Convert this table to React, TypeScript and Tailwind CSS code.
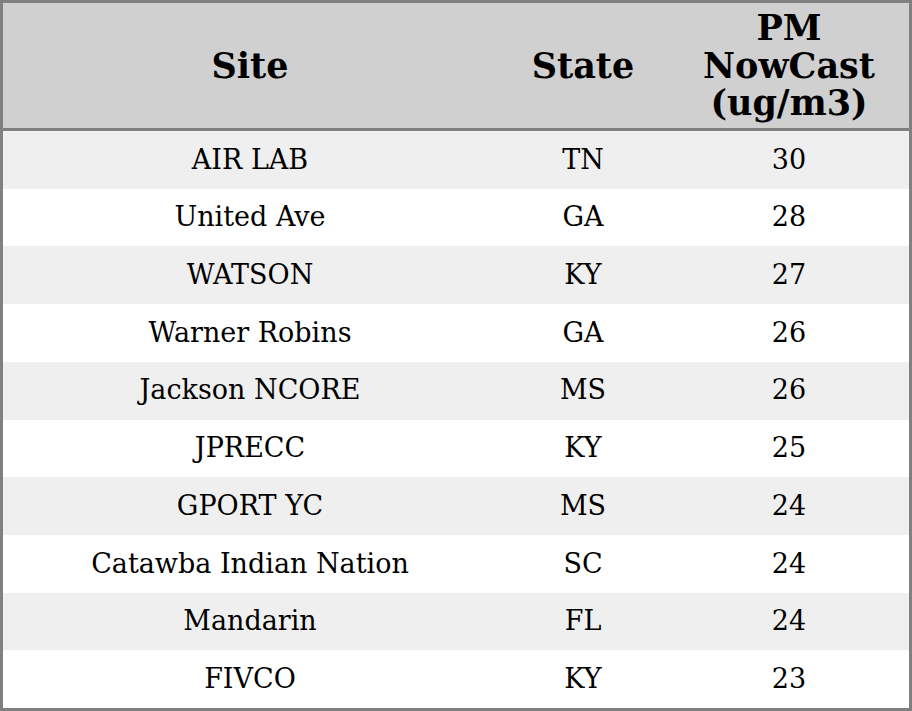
const rows = [
  { site: "AIR LAB", state: "TN", pm: 30 },
  { site: "United Ave", state: "GA", pm: 28 },
  { site: "WATSON", state: "KY", pm: 27 },
  { site: "Warner Robins", state: "GA", pm: 26 },
  { site: "Jackson NCORE", state: "MS", pm: 26 },
  { site: "JPRECC", state: "KY", pm: 25 },
  { site: "GPORT YC", state: "MS", pm: 24 },
  { site: "Catawba Indian Nation", state: "SC", pm: 24 },
  { site: "Mandarin", state: "FL", pm: 24 },
  { site: "FIVCO", state: "KY", pm: 23 },
];

const App = () => {
  return (
    <div
      className="h-[711px] w-[912px] border-[3px] border-[#808080] bg-white text-black"
      style={{ fontFamily: '"DejaVu Serif", serif' }}
    >
      <div className="grid h-[128px] grid-cols-[494px_172px_1fr] items-center border-b-[3px] border-[#808080] bg-[#d0d0d0] text-center text-[35px] font-bold leading-[37.5px]">
        <div>Site</div>
        <div>State</div>
        <div>
          PM
          <br />
          NowCast
          <br />
          (ug/m3)
        </div>
      </div>

      <div className="flex h-[577px] flex-col">
        {rows.map((row, i) => (
          <div
            key={row.site}
            className={`grid flex-1 grid-cols-[494px_172px_1fr] items-center text-center text-[27px] ${
              i % 2 === 0 ? "bg-[#efefef]" : "bg-white"
            }`}
          >
            <div>{row.site}</div>
            <div>{row.state}</div>
            <div>{row.pm}</div>
          </div>
        ))}
      </div>
    </div>
  );
};

export default App;
